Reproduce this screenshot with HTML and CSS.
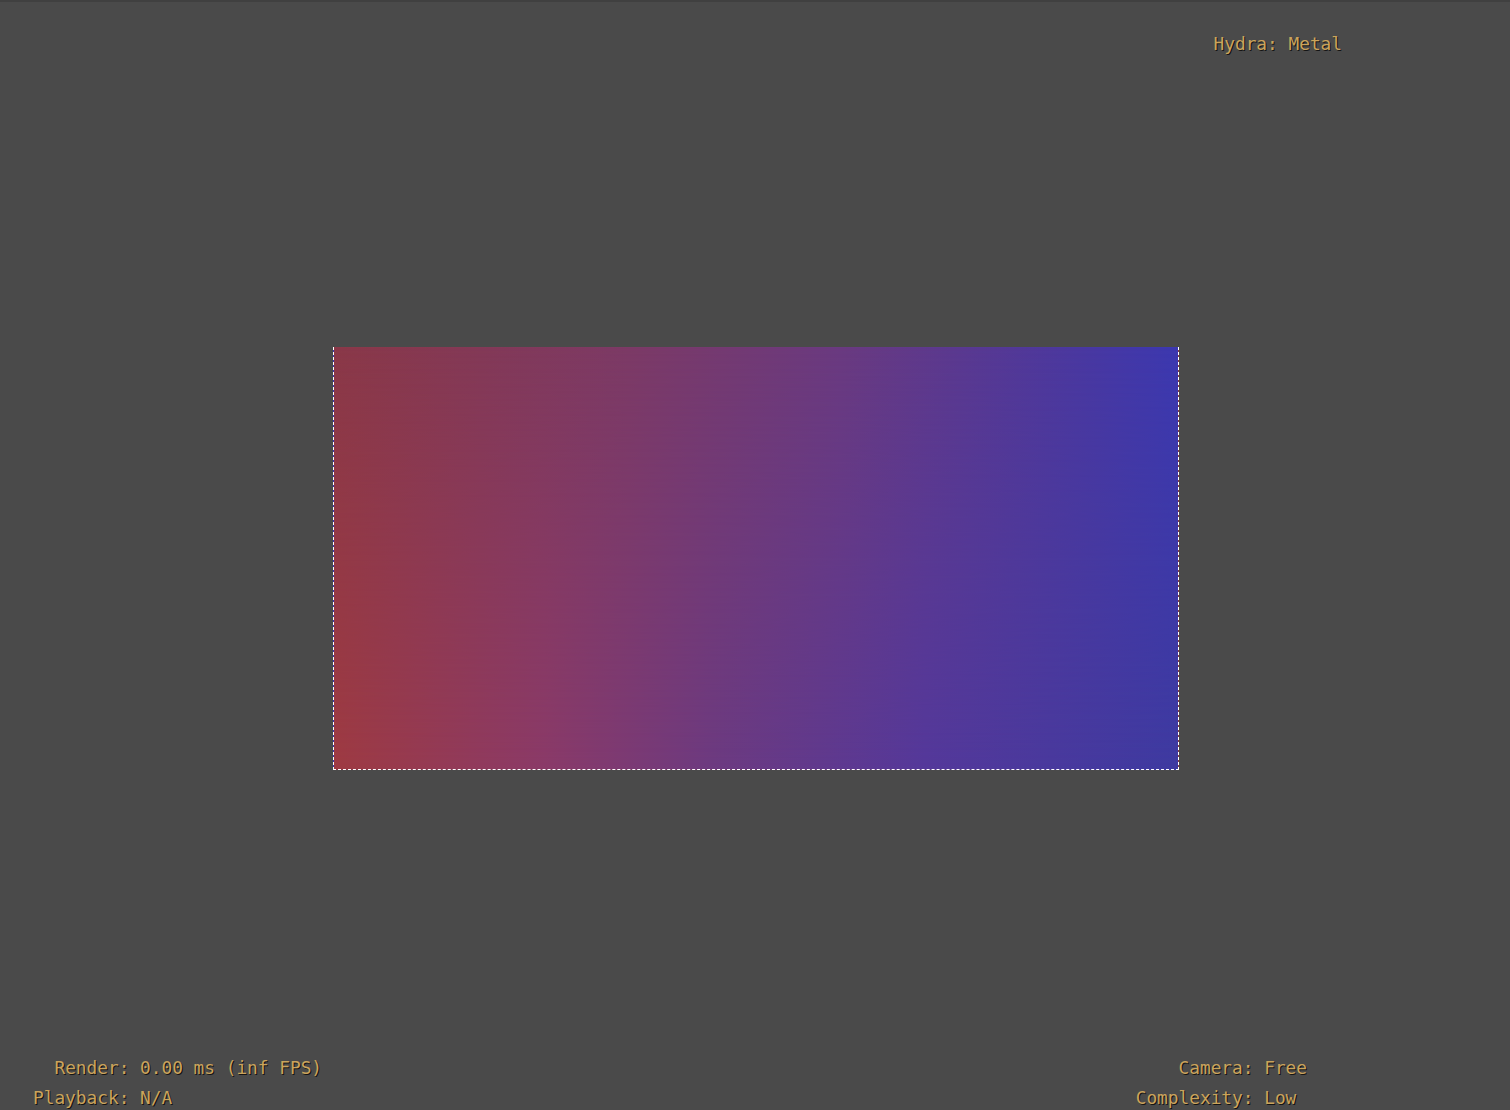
FILE: index.html
```html
<!DOCTYPE html>
<html>
<head>
<meta charset="utf-8">
<link rel="stylesheet" href="styles.css">
</head>
<body>
<div class="viewport">
  <div class="top-bar">
    <span class="hud">Hydra: Metal</span>
  </div>
  <div class="stage">
    <div class="quad"></div>
  </div>
  <div class="bottom-bar">
    <div class="stats stats-left">
      <span class="label">Render:</span><span class="value">0.00 ms (inf FPS)</span>
      <span class="label">Playback:</span><span class="value">N/A</span>
    </div>
    <div class="stats stats-right">
      <span class="label">Camera:</span><span class="value">Free</span>
      <span class="label">Complexity:</span><span class="value">Low</span>
    </div>
  </div>
</div>
</body>
</html>
```
FILE: styles.css
```css
html, body {
  margin: 0;
  padding: 0;
  background: #4a4a4a;
  overflow: hidden;
}

.viewport {
  height: 1108px;
  border-top: 2px solid #404040;
  display: flex;
  flex-direction: column;
  font-family: "DejaVu Sans Mono", "Liberation Mono", monospace;
  font-size: 17.8px;
  line-height: 30px;
  color: #cba45c;
  text-shadow: 1px 1px 0 #141414;
}

.top-bar {
  display: flex;
  justify-content: flex-end;
  padding-top: 27px;
  padding-right: 168px;
}

.stage {
  flex: 1;
  display: flex;
  align-items: flex-start;
  padding-top: 288px;
  padding-left: 333px;
}

.quad {
  position: relative;
  width: 844px;
  height: 422px;
  border: 1px dashed #ffffff;
  border-top: none;
  background: linear-gradient(90deg, #8a3848 0%, #7c3a66 35%, #6a3a80 60%, #4a38a0 88%, #3c38b0 100%);
}

.quad::after {
  content: "";
  position: absolute;
  inset: 0;
  background: linear-gradient(90deg, #9e3a42 0%, #8a3a68 25%, #6c3a80 45%, #54389a 70%, #3e3aa0 100%);
  -webkit-mask-image: linear-gradient(to bottom, transparent, #000);
  mask-image: linear-gradient(to bottom, transparent, #000);
}

.bottom-bar {
  display: flex;
  justify-content: space-between;
  margin-bottom: -3px;
}

.stats {
  display: grid;
  grid-template-columns: auto auto;
  column-gap: 0.602em;
}

.stats .label {
  text-align: right;
}

.stats-left {
  padding-left: 33px;
}

.stats-right {
  padding-right: 203px;
}
```
